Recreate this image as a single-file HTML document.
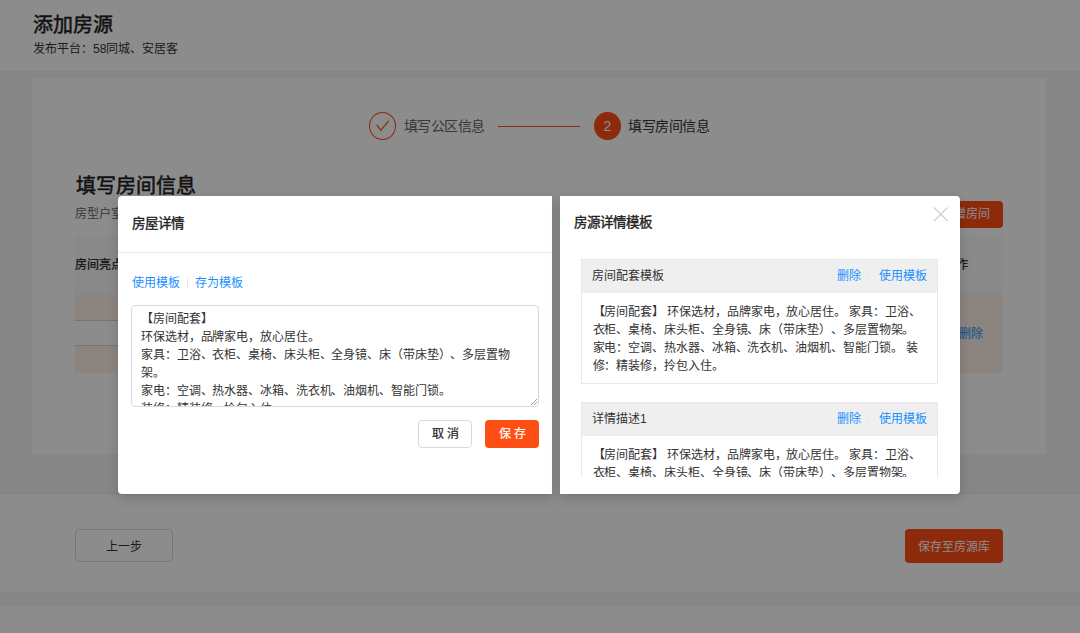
<!DOCTYPE html>
<html lang="zh-CN"><head><meta charset="utf-8">
<style>
*{box-sizing:border-box;margin:0;padding:0}
html,body{width:1080px;height:633px;overflow:hidden}
body{text-spacing-trim:space-all;background:#f5f5f5;font-family:"Liberation Sans",sans-serif;color:#333;position:relative}
.abs{position:absolute;white-space:nowrap}
.hdr{position:absolute;left:0;top:0;width:1080px;height:71px;background:#fff}
.card{position:absolute;left:32px;top:78px;width:1014px;height:376px;background:#fff}
.footer{position:absolute;left:0;top:495px;width:1080px;height:97px;background:#fff}
.footer2{position:absolute;left:0;top:605.5px;width:1080px;height:28px;background:#fff}
.mask{position:absolute;left:0;top:0;width:1080px;height:633px;background:rgba(0,0,0,0.45)}
.modal{position:absolute;background:#fff;border-radius:4px;box-shadow:0 4px 12px rgba(0,0,0,0.15)}
.link{color:#1890ff}
.t12{font-size:12px;line-height:18px}
.tcard{position:relative;border:1px solid #e8e8e8;background:#fff}
.thead{position:relative;height:33px;background:#efefef}
.orange{background:#ff4e14}
</style></head><body>
<div class="hdr">
  <div class="abs" style="left:33px;top:11px;font-size:20px;line-height:28px;-webkit-text-stroke:0.5px #222;color:#222">添加房源</div>
  <div class="abs" style="left:33px;top:41px;font-size:12px;line-height:17px;color:#333">发布平台：58同城、安居客</div>
</div>
<div class="card">
</div>
<!-- steps (page coords) -->
<div class="abs" style="left:369px;top:112px;width:27px;height:28px;border:1px solid #ff4e14;border-radius:50%"></div>
<svg class="abs" style="left:369px;top:112px" width="27" height="28" viewBox="0 0 27 28"><path d="M7.8 12.8 L11.8 18.3 L19.6 8.9" fill="none" stroke="#ff4e14" stroke-width="1.3"/></svg>
<div class="abs" style="left:403.5px;top:116px;font-size:14px;letter-spacing:-0.5px;line-height:20px;color:#666">填写公区信息</div>
<div class="abs" style="left:498px;top:126px;width:82px;height:1px;background:#ff4e14"></div>
<div class="abs orange" style="left:594px;top:112px;width:27px;height:28px;border-radius:50%;color:#fff;font-size:14px;line-height:28px;text-align:center">2</div>
<div class="abs" style="left:628px;top:116px;font-size:14px;letter-spacing:-0.5px;line-height:20px;color:#333">填写房间信息</div>

<div class="abs" style="left:75.5px;top:171.5px;font-size:20px;line-height:28px;-webkit-text-stroke:0.5px #222;color:#222">填写房间信息</div>
<div class="abs" style="left:75px;top:206px;font-size:12px;line-height:17px;color:#666">房型户室信息</div>
<div class="abs orange" style="left:928px;top:201px;width:75px;height:27px;border-radius:4px;color:#fff;font-size:12px;line-height:27px;text-align:center">新增房间</div>

<!-- table -->
<div class="abs" style="left:75px;top:236px;width:928px;height:57.5px;background:#fafafa"></div>
<div class="abs" style="left:75px;top:257px;font-size:12px;line-height:17px;color:#222;-webkit-text-stroke:0.25px #222">房间亮点</div>
<div class="abs" style="left:944px;top:257px;font-size:12px;line-height:17px;color:#222;-webkit-text-stroke:0.25px #222">操作</div>
<div class="abs" style="left:75px;top:293.5px;width:928px;height:79.5px;background:#fff1e8"></div>
<div class="abs" style="left:75px;top:320px;width:875px;height:26px;background:#fff;border-top:1px solid #d4d4d4;border-bottom:1px solid #d4d4d4"></div>
<div class="abs" style="left:959px;top:325.5px;font-size:12px;line-height:17px;color:#1890ff">删除</div>

<!-- footer -->
<div class="footer"></div>
<div class="footer2"></div>
<div class="abs" style="left:75px;top:529px;width:98px;height:33px;border:1px solid #d9d9d9;border-radius:4px;background:#fff;font-size:12px;line-height:34px;text-align:center;color:#333">上一步</div>
<div class="abs orange" style="left:905px;top:529px;width:98px;height:34px;border-radius:4px;font-size:12px;line-height:36px;text-align:center;color:#fff">保存至房源库</div>

<div class="mask"></div>
<div class="abs" style="left:552px;top:196px;width:8px;height:298px;background:#8c8c8c"></div>

<!-- left modal -->
<div class="modal" style="left:118px;top:196px;width:434px;height:297.5px;border-radius:4px 0 0 4px">
  <div class="abs" style="left:13.5px;top:17.5px;font-size:13.5px;line-height:20px;-webkit-text-stroke:0.35px #222;color:#222">房屋详情</div>
  <div class="abs" style="left:0;top:56px;width:434px;height:1px;background:#e8e8e8"></div>
  <div class="abs t12" style="left:14px;top:78px;color:#1890ff">使用模板</div>
  <div class="abs" style="left:69px;top:81px;width:1px;height:12px;background:#e8e8e8"></div>
  <div class="abs t12" style="left:77px;top:78px;color:#1890ff">存为模板</div>
  <div class="abs" style="left:13px;top:109px;width:408px;height:102px;border:1px solid #d9d9d9;border-radius:4px;overflow:hidden">
    <div class="abs t12" style="left:9px;top:4px;color:#333;letter-spacing:-0.1px">【房间配套】<br>环保选材，品牌家电，放心居住。<br>家具：卫浴、衣柜、桌椅、床头柜、全身镜、床（带床垫）、多层置物<br>架。<br>家电：空调、热水器、冰箱、洗衣机、油烟机、智能门锁。<br>装修：精装修，拎包入住。</div>
    <svg class="abs" style="right:0px;bottom:0px" width="8" height="8" viewBox="0 0 8 8"><path d="M1 7 L7 1 M4 7 L7 4" stroke="#888" stroke-width="0.8"/></svg>
  </div>
  <div class="abs" style="left:300px;top:224px;width:54px;height:28px;border:1px solid #d9d9d9;border-radius:4px;font-size:12px;line-height:26px;text-align:center;color:#222;letter-spacing:3px;text-indent:3px;-webkit-text-stroke:0.2px #222">取消</div>
  <div class="abs orange" style="left:367px;top:224px;width:54px;height:28px;border-radius:4px;font-size:12px;line-height:28px;text-align:center;color:#fff;letter-spacing:3px;text-indent:3px;-webkit-text-stroke:0.2px #fff">保存</div>
</div>
<!-- right modal -->
<div class="modal" style="left:560px;top:196px;width:400px;height:297.5px;border-radius:0 4px 4px 0">
  <div class="abs" style="left:13.5px;top:17px;font-size:13.5px;line-height:20px;-webkit-text-stroke:0.35px #222;color:#222">房源详情模板</div>
  <svg class="abs" style="left:373px;top:11px" width="16" height="16" viewBox="0 0 16 16"><path d="M1 0.5 L14.5 14 M14.5 0.5 L1 14" stroke="#d0d0d0" stroke-width="1.3"/></svg>
  <div class="abs" style="left:21px;top:63px;width:357px;height:218px;overflow:hidden">
    <div class="tcard" style="height:125px">
      <div class="thead"><span class="abs t12" style="left:10px;top:7px;color:#333">房间配套模板</span><span class="abs t12" style="left:255px;top:7px;color:#1890ff">删除</span><span class="abs" style="left:286px;top:10px;width:1px;height:13px;background:#e6e6e6"></span><span class="abs t12" style="left:297px;top:7px;color:#1890ff">使用模板</span></div>
      <div class="abs t12" style="left:10.5px;top:42.5px;color:#333;letter-spacing:-0.08px">【房间配套】 环保选材，品牌家电，放心居住。 家具：卫浴、<br>衣柜、桌椅、床头柜、全身镜、床（带床垫）、多层置物架。<br>家电：空调、热水器、冰箱、洗衣机、油烟机、智能门锁。 装<br>修：精装修，拎包入住。</div>
    </div>
    <div class="tcard" style="height:125px;margin-top:18px">
      <div class="thead"><span class="abs t12" style="left:10px;top:7px;color:#333">详情描述1</span><span class="abs t12" style="left:255px;top:7px;color:#1890ff">删除</span><span class="abs" style="left:286px;top:10px;width:1px;height:13px;background:#e6e6e6"></span><span class="abs t12" style="left:297px;top:7px;color:#1890ff">使用模板</span></div>
      <div class="abs t12" style="left:10.5px;top:42.5px;color:#333;letter-spacing:-0.08px">【房间配套】 环保选材，品牌家电，放心居住。 家具：卫浴、<br>衣柜、桌椅、床头柜、全身镜、床（带床垫）、多层置物架。<br>家电：空调、热水器、冰箱、洗衣机、油烟机、智能门锁。 装<br>修：精装修，拎包入住。</div>
    </div>
  </div>
</div>
</body></html>
